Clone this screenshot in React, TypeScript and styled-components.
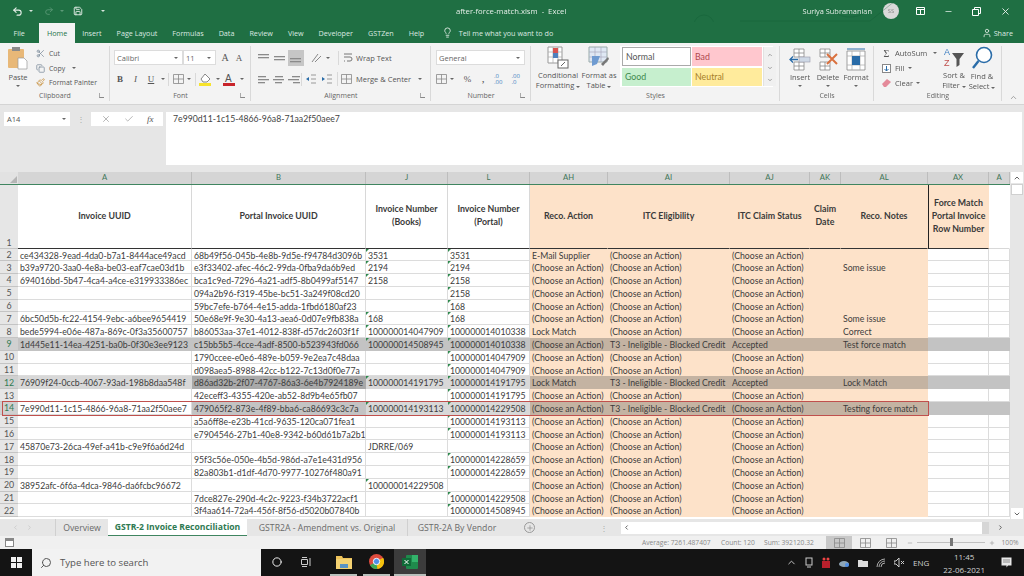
import React from "react";
import styled, { createGlobalStyle } from "styled-components";
import { Scissors, Copy, Paintbrush, Undo2, Redo2, Save, Lightbulb, X, Check, Search, User, Minus, ChevronUp, ChevronDown, ChevronLeft, ChevronRight, Plus, Circle } from "lucide-react";

const GlobalStyle = createGlobalStyle`
    html, body {
        margin: 0;
        padding: 0;
        background: #e6e6e6;
        overflow: hidden;
    }
    * { box-sizing: border-box; }
`;

const UI = `"Open Sans", "Noto Sans", sans-serif`;
const CELL = `Lato, "Liberation Sans", sans-serif`;
const COLS = "18px 174px 174px 82px 82px 78px 122px 80px 31px 87px 61px 21px";

const Page = styled.div`
    width: 1024px;
    height: 576px;
    display: flex;
    flex-direction: column;
    overflow: hidden;
    font-family: ${UI};
    filter: blur(0.4px);
`;

/* title bar */
const TitleBar = styled.div`
    height: 22px;
    background: #1f6f43;
    color: #e6efe9;
    font-size: 7.7px;
    display: flex;
    align-items: center;
    position: relative;
`;
const Qat = styled.div`
    width: 400px;
    padding-left: 12px;
    display: flex;
    align-items: center;
    gap: 3px;
`;
const Spacer = styled.span<{ $w: number }>`
    width: ${(p) => p.$w}px;
    flex: none;
`;
const Caret = styled.span<{ $c?: string; $l?: number; $t?: number }>`
    width: 0;
    height: 0;
    border-left: 2px solid transparent;
    border-right: 2px solid transparent;
    border-top: 2.5px solid ${(p) => p.$c || "#d8e6dd"};
    display: inline-block;
    margin-left: ${(p) => p.$l ?? 3}px;
    margin-top: ${(p) => p.$t ?? 0}px;
    flex: none;
`;
const DocName = styled.div`
    position: absolute;
    left: 456px;
    white-space: pre;
`;
const Account = styled.div`
    margin-left: auto;
    display: flex;
    align-items: center;
    font-size: 7.4px;
`;
const Avatar = styled.div`
    width: 16px;
    height: 16px;
    border-radius: 50%;
    background: #d9d9d9;
    color: #8a8a8a;
    font-size: 6px;
    display: flex;
    align-items: center;
    justify-content: center;
    margin: 0 17px 0 11px;
`;
const WinButtons = styled.div`
    display: flex;
    align-items: center;
    gap: 19px;
    width: 108px;
    padding-right: 10px;
`;
const Circuit = styled.svg`
    position: absolute;
    left: 680px;
    top: 0;
    opacity: 0.3;
    pointer-events: none;
`;

/* tabs */
const TabBar = styled.div`
    height: 21px;
    background: #1f6f43;
    color: #dce9e1;
    font-size: 7.2px;
    display: flex;
    align-items: stretch;
    padding-left: 6px;
    position: relative;
    white-space: nowrap;
`;
const Tab = styled.div<{ $active?: boolean; $mr?: number }>`
    padding: 0 7.5px;
    display: flex;
    align-items: center;
    background: ${(p) => (p.$active ? "#f3f3f3" : "transparent")};
    color: ${(p) => (p.$active ? "#26734a" : "inherit")};
    margin-top: 1px;
    margin-right: ${(p) => p.$mr ?? 0}px;
`;
const TellMe = styled.div`
    display: flex;
    align-items: center;
    gap: 6px;
    margin-left: 10px;
`;
const Share = styled.div`
    display: flex;
    align-items: center;
    gap: 2px;
    margin-left: auto;
    padding-right: 11px;
`;

/* ribbon */
const Ribbon = styled.div`
    height: 62px;
    background: #f3f3f3;
    border-bottom: 1px solid #d4d4d4;
    display: flex;
    color: #555;
    font-size: 7.5px;
`;
const Group = styled.div<{ $w: number }>`
    width: ${(p) => p.$w}px;
    flex: none;
    display: flex;
    flex-direction: column;
    padding: 3px 0 0;
    position: relative;
    &::after {
        content: "";
        position: absolute;
        right: 0;
        top: 3px;
        bottom: 3px;
        width: 1px;
        background: #d9d9d9;
    }
`;
const GroupBody = styled.div<{ $gap?: number; $pad?: string }>`
    flex: 1;
    display: flex;
    gap: ${(p) => p.$gap ?? 0}px;
    padding: ${(p) => p.$pad || "0"};
    min-height: 0;
`;
const GroupLabel = styled.div`
    height: 14px;
    text-align: center;
    font-size: 7px;
    line-height: 12px;
    color: #666;
    position: relative;
`;
const Launcher = styled.span`
    position: absolute;
    right: 6px;
    top: 3px;
    width: 5px;
    height: 5px;
    border-left: 1px solid #aaa;
    border-bottom: 1px solid #888;
`;
const BigBtn = styled.div<{ $w: number }>`
    width: ${(p) => p.$w}px;
    flex: none;
    display: flex;
    flex-direction: column;
    align-items: center;
    text-align: center;
    line-height: 10.3px;
    font-size: 7.5px;
    white-space: nowrap;
`;
const BigIcon = styled.div`
    height: 25px;
    display: flex;
    align-items: flex-end;
    justify-content: center;
    margin-bottom: 1px;
`;
const Stack = styled.div<{ $gap?: number; $top?: number; $w?: number; $fs?: number }>`
    display: flex;
    flex-direction: column;
    gap: ${(p) => p.$gap ?? 0}px;
    padding-top: ${(p) => p.$top ?? 0}px;
    width: ${(p) => (p.$w ? `${p.$w}px` : "auto")};
    font-size: ${(p) => (p.$fs ? `${p.$fs}px` : "inherit")};
    flex: none;
`;
const Line = styled.div<{ $gap?: number }>`
    display: flex;
    align-items: center;
    gap: ${(p) => p.$gap ?? 4}px;
    white-space: nowrap;
    height: 15.5px;
`;
const Combo = styled.div<{ $w: number }>`
    width: ${(p) => p.$w}px;
    height: 15px;
    background: #fff;
    border: 1px solid #dcdcdc;
    display: flex;
    align-items: center;
    justify-content: space-between;
    padding: 0 4px 0 2px;
    color: #666;
    font-size: 7.5px;
    flex: none;
`;
const Glyph = styled.span<{ $b?: boolean; $i?: boolean; $u?: boolean; $w?: number; $s?: number; $l?: number }>`
    width: ${(p) => p.$w ?? 13}px;
    text-align: center;
    font-family: "Liberation Serif", serif;
    font-size: ${(p) => p.$s ?? 9}px;
    font-weight: ${(p) => (p.$b ? 700 : 400)};
    font-style: ${(p) => (p.$i ? "italic" : "normal")};
    text-decoration: ${(p) => (p.$u ? "underline" : "none")};
    color: #555;
    flex: none;
    margin-left: ${(p) => p.$l ?? 0}px;
`;
const Sep = styled.span<{ $h?: number }>`
    width: 1px;
    height: ${(p) => p.$h ?? 13}px;
    background: #d9d9d9;
    flex: none;
`;
const AlignBtn = styled.div<{ $on?: boolean; $w?: number }>`
    width: ${(p) => p.$w ?? 16}px;
    height: 16px;
    display: flex;
    align-items: center;
    justify-content: center;
    background: ${(p) => (p.$on ? "#c6c6c6" : "transparent")};
    flex: none;
`;
const Fraction = styled.span`
    font-size: 6px;
    color: #3f7fc1;
    line-height: 6px;
`;
const Gallery = styled.div`
    width: 153px;
    height: 41px;
    background: #fff;
    display: grid;
    grid-template-columns: 69px 70px 13px;
    grid-template-rows: 1fr 1fr;
    gap: 2px 1px;
    padding: 1px 0 1px 2px;
    flex: none;
`;
const StyleCell = styled.div<{ $bg: string; $fg: string; $boxed?: boolean }>`
    background: ${(p) => p.$bg};
    color: ${(p) => p.$fg};
    border: ${(p) => (p.$boxed ? "1px solid #aaa" : "none")};
    font-family: ${CELL};
    font-size: 8.8px;
    display: flex;
    align-items: center;
    padding-left: 3px;
`;
const GalleryScroll = styled.div`
    grid-column: 3;
    grid-row: 1 / span 2;
    background: #f0f0f0;
    border-left: 1px solid #e2e2e2;
    display: flex;
    flex-direction: column;
    align-items: center;
    justify-content: space-between;
    padding: 5px 0 3px;
`;
const Collapse = styled.div`
    flex: 1;
    display: flex;
    align-items: flex-end;
    justify-content: center;
    padding-bottom: 2px;
    color: #888;
`;

/* formula bar */
const FormulaBar = styled.div`
    height: 67px;
    background: #e6e6e6;
    display: flex;
    align-items: flex-start;
    padding: 7px 2px 0 4px;
    flex: none;
`;
const NameBox = styled.div`
    width: 66px;
    height: 14px;
    background: #fff;
    font-size: 7.5px;
    color: #555;
    display: flex;
    align-items: center;
    justify-content: space-between;
    padding: 0 4px 0 3px;
`;
const Dots = styled.div`
    width: 21px;
    text-align: center;
    color: #aaa;
    font-size: 8px;
    line-height: 13px;
`;
const FxBox = styled.div`
    width: 72px;
    height: 14px;
    background: #fff;
    display: flex;
    align-items: center;
    justify-content: space-around;
    padding: 0 3px;
    color: #aaa;
    margin-right: 3px;
`;
const Fx = styled.i`
    font-family: "Liberation Serif", serif;
    font-size: 9px;
    color: #555;
`;
const FormulaInput = styled.div`
    flex: 1;
    height: 53px;
    background: #fff;
    font-family: ${CELL};
    font-size: 8.7px;
    color: #444;
    padding: 1px 7px;
`;

/* sheet */
const SheetWrap = styled.div`
    flex: none;
    height: 347px;
    display: flex;
    background: #fff;
`;
const Sheet = styled.div`
    width: 1010px;
    flex: none;
    overflow: hidden;
`;
const ColHeadRow = styled.div`
    display: grid;
    grid-template-columns: ${COLS};
    height: 12px;
    background: #d5d5d5;
`;
const ColHead = styled.div`
    border-right: 1px solid #bdbdbd;
    text-align: center;
    font-size: 7.7px;
    line-height: 11px;
    color: #417558;
    font-family: ${CELL};
    overflow: hidden;
`;
const Corner = styled.div`
    background: #e2e2e2;
    position: relative;
    &::after {
        content: "";
        position: absolute;
        right: 1px;
        bottom: 1px;
        border-left: 7px solid transparent;
        border-bottom: 7px solid #b5b5b5;
    }
`;
const HeadRow = styled.div`
    display: grid;
    grid-template-columns: ${COLS};
    height: 64.5px;
    border-top: 1px solid #3f8560;
`;
const RowNum = styled.div<{ $sel?: boolean; $bottom?: boolean }>`
    background: ${(p) => (p.$sel ? "#d0d0d0" : "#e6e6e6")};
    color: ${(p) => (p.$sel ? "#2f7a52" : "#555")};
    border-bottom: 1px solid #c4c4c4;
    font-family: ${CELL};
    font-size: 8.8px;
    display: flex;
    align-items: ${(p) => (p.$bottom ? "flex-end" : "center")};
    justify-content: center;
`;
const HeadCell = styled.div<{ $peach?: boolean; $left?: boolean; $empty?: boolean }>`
    background: ${(p) => (p.$peach ? "#fde2c9" : "#fff")};
    border-bottom: 1px solid ${(p) => (p.$empty ? "#d8d8d8" : "#333")};
    border-left: ${(p) => (p.$left ? "1px solid #222" : "none")};
    border-right: 1px solid ${(p) => (p.$peach || p.$empty ? "transparent" : "#d8d8d8")};
    font-family: ${CELL};
    font-size: 8.8px;
    font-weight: 700;
    color: #3a3a3a;
    line-height: 12.8px;
    display: flex;
    align-items: center;
    justify-content: center;
    text-align: center;
`;
const Row = styled.div`
    display: grid;
    grid-template-columns: ${COLS};
    grid-template-rows: 12.8px;
    height: 12.8px;
    position: relative;
`;
const Cell = styled.div<{ $bg: string; $grid: boolean; $mark?: boolean }>`
    background: ${(p) => p.$bg};
    border-right: ${(p) => (p.$grid ? "1px solid #dcdcdc" : "none")};
    border-bottom: ${(p) => (p.$grid ? "1px solid #dcdcdc" : "none")};
    font-family: ${CELL};
    font-size: 8.7px;
    line-height: 13.6px;
    color: #3c3c3c;
    padding-left: 2px;
    white-space: nowrap;
    position: relative;
    &::before {
        content: "";
        display: ${(p) => (p.$mark ? "block" : "none")};
        position: absolute;
        left: 0;
        top: 0;
        border-top: 3px solid #2f8a4e;
        border-right: 3px solid transparent;
    }
`;
const ActiveOutline = styled.div`
    position: absolute;
    left: 2px;
    width: 927px;
    top: -1px;
    bottom: -1px;
    border: 1px solid #c0504d;
    pointer-events: none;
    z-index: 5;
`;
const VScroll = styled.div`
    flex: 1;
    background: #e6e6e6;
    display: flex;
    flex-direction: column;
    align-items: center;
    color: #666;
`;
const VArrow = styled.div`
    width: 12px;
    height: 11px;
    background: #fff;
    display: flex;
    align-items: center;
    justify-content: center;
    flex: none;
`;
const VThumb = styled.div`
    width: 12px;
    height: 11px;
    background: #fff;
    border: 1px solid #d0d0d0;
    margin-top: 1px;
    flex: none;
`;
const VGap = styled.div`
    flex: 1;
`;

/* sheet tabs */
const SheetTabs = styled.div`
    height: 17px;
    background: #e6e6e6;
    display: flex;
    align-items: stretch;
    font-size: 8.7px;
    color: #6a6a6a;
    flex: none;
`;
const TabNav = styled.div`
    width: 55px;
    display: flex;
    align-items: center;
    padding-left: 12px;
    gap: 7px;
    color: #bdbdbd;
`;
const SheetTab = styled.div<{ $active?: boolean; $w: number; $noLine?: boolean }>`
    width: ${(p) => p.$w}px;
    flex: none;
    display: flex;
    align-items: center;
    justify-content: center;
    white-space: nowrap;
    background: ${(p) => (p.$active ? "#fff" : "transparent")};
    color: ${(p) => (p.$active ? "#2f7a52" : "inherit")};
    font-weight: ${(p) => (p.$active ? 700 : 400)};
    font-size: ${(p) => (p.$active ? "8.6px" : "inherit")};
    border-bottom: ${(p) => (p.$active ? "1px solid #3f8560" : "none")};
    border-left: ${(p) => (p.$active || p.$noLine ? "none" : "1px solid #d0d0d0")};
`;
const AddSheet = styled.div`
    width: 115px;
    flex: none;
    display: flex;
    align-items: center;
    justify-content: space-between;
    padding: 0 7px 0 18px;
    color: #888;
`;
const AddCircle = styled.div`
    width: 11px;
    height: 11px;
    border-radius: 50%;
    border: 1px solid #999;
    display: flex;
    align-items: center;
    justify-content: center;
`;
const HScroll = styled.div`
    flex: 1;
    display: flex;
    align-items: center;
    padding: 1px 8px 1px 0;
    color: #555;
`;
const HBtn = styled.div`
    width: 10px;
    height: 12px;
    background: #fff;
    display: flex;
    align-items: center;
    justify-content: center;
    flex: none;
`;
const HTrack = styled.div`
    width: 358px;
    height: 12px;
    background: #fff;
    border-right: 7px solid #d6d6d6;
    flex: none;
    margin-right: 8px;
`;

/* status bar */
const StatusBar = styled.div`
    height: 13px;
    background: #f0f0f0;
    display: flex;
    align-items: stretch;
    font-size: 6.7px;
    color: #888;
    padding-left: 5px;
    flex: none;
    white-space: nowrap;
`;
const StatusText = styled.div<{ $w: number; $center?: boolean }>`
    width: ${(p) => p.$w}px;
    flex: none;
    display: flex;
    align-items: center;
    justify-content: ${(p) => (p.$center ? "center" : "flex-start")};
`;
const ViewBtn = styled.div<{ $on?: boolean; $w: number }>`
    width: ${(p) => p.$w}px;
    flex: none;
    display: flex;
    align-items: center;
    justify-content: center;
    background: ${(p) => (p.$on ? "#c8c8c8" : "transparent")};
`;
const Zoomer = styled.div`
    width: 68px;
    height: 1px;
    background: #c0c0c0;
    align-self: center;
    position: relative;
    margin: 0 3px;
    flex: none;
`;
const ZoomThumb = styled.span`
    position: absolute;
    left: 33px;
    top: -4px;
    width: 3px;
    height: 8px;
    background: #777;
`;

/* taskbar */
const Taskbar = styled.div`
    flex: 1;
    background: #141414;
    display: flex;
    align-items: stretch;
    color: #d0d0d0;
`;
const Start = styled.div`
    width: 32px;
    display: flex;
    align-items: center;
    justify-content: center;
    flex: none;
`;
const WinLogo = styled.div`
    display: grid;
    grid-template-columns: 5px 5px;
    grid-template-rows: 5px 5px;
    gap: 1px;
    & > span { background: #f0f0f0; }
`;
const SearchBox = styled.div`
    width: 229px;
    background: #f2f2f2;
    color: #555;
    font-size: 9.6px;
    display: flex;
    align-items: center;
    gap: 8px;
    padding-left: 8px;
    flex: none;
`;
const MirrorSearch = styled(Search)`
    transform: scaleX(-1);
`;
const TaskIcon = styled.div<{ $w: number; $on?: boolean; $bar?: boolean; $ml?: number }>`
    width: ${(p) => p.$w}px;
    flex: none;
    display: flex;
    align-items: center;
    justify-content: center;
    margin-left: ${(p) => p.$ml ?? 0}px;
    background: ${(p) => (p.$on ? "#3c3c3c" : "transparent")};
    border-bottom: 2px solid ${(p) => (p.$bar ? "#b8c0bc" : "transparent")};
`;
const Tray = styled.div`
    margin-left: auto;
    display: flex;
    align-items: center;
    gap: 8px;
    font-size: 8px;
    padding-right: 12px;
`;
const Clock = styled.div`
    text-align: center;
    font-size: 8px;
    line-height: 13px;
    margin: 0 8px 0 6px;
`;

const WinIcon = () => (
    <WinLogo><span /><span /><span /><span /></WinLogo>
);

const PasteIcon = () => (
    <svg width="22" height="25" viewBox="0 0 22 25">
        <rect x="1" y="3" width="16" height="19" rx="1" fill="#e8b878" />
        <rect x="5" y="1" width="8" height="4" fill="#8a8a8a" />
        <path d="M11 12h6l3 3v8h-9z" fill="#fff" stroke="#999" strokeWidth=".7" />
    </svg>
);
const CondIcon = () => (
    <svg width="22" height="23" viewBox="0 0 22 23">
        <path d="M1 1h14v16H1z" fill="#fff" stroke="#999" />
        <path d="M1 6h14M1 11h14M6 1v16M11 1v16" stroke="#aaa" strokeWidth=".7" />
        <rect x="6" y="2" width="5" height="5" fill="#d9534f" />
        <rect x="6" y="7" width="5" height="5" fill="#4f81bd" />
        <rect x="11" y="14" width="10" height="8" fill="#fff" stroke="#666" />
        <path d="M14 20l4-4" stroke="#666" />
    </svg>
);
const TableIcon = () => (
    <svg width="22" height="23" viewBox="0 0 22 23">
        <path d="M1 1h18v15H1z" fill="#dfe8f4" stroke="#9aa" />
        <path d="M1 6h18M1 11h18M7 1v15M13 1v15" stroke="#aab" strokeWidth=".7" />
        <path d="M4 10h8l-3 8-5 2z" fill="#6f9bd1" />
        <path d="M13 18l7-7 1 2-6 7z" fill="#777" />
    </svg>
);
const InsertIcon = () => (
    <svg width="22" height="23" viewBox="0 0 22 23">
        <path d="M5 1h10v8H5zM5 14h10v8H5zM5 5h10M10 1v8M5 18h10M10 14v8" fill="#fff" stroke="#888" strokeWidth=".8" />
        <rect x="10" y="9" width="11" height="5" fill="#cfd9e6" stroke="#99a" strokeWidth=".6" />
        <path d="M1 11.5h8M4 8.5l-3 3 3 3" fill="none" stroke="#2a6ca8" strokeWidth="1.3" />
    </svg>
);
const DeleteIcon = () => (
    <svg width="22" height="23" viewBox="0 0 22 23">
        <path d="M3 1h10v8H3zM3 14h10v8H3zM3 5h10M8 1v8M3 18h10M8 14v8" fill="#fff" stroke="#888" strokeWidth=".8" />
        <path d="M10 6l10 10M20 6L10 16" stroke="#d9713f" strokeWidth="2" />
    </svg>
);
const FormatIcon = () => (
    <svg width="22" height="23" viewBox="0 0 22 23">
        <path d="M2 3h18v19H2z" fill="#fff" stroke="#888" strokeWidth=".8" />
        <path d="M2 8h18M2 17h18M7 3v19M15 3v19" stroke="#aaa" strokeWidth=".7" />
        <rect x="7" y="8" width="8" height="9" fill="#2a6ca8" />
        <path d="M2 1h18" stroke="#2a6ca8" />
    </svg>
);
const SortIcon = () => (
    <svg width="20" height="23" viewBox="0 0 20 23">
        <text x="0" y="9" fontSize="9" fill="#3f7fc1" fontFamily="Liberation Sans">A</text>
        <text x="0" y="20" fontSize="9" fill="#c0504d" fontFamily="Liberation Sans">Z</text>
        <path d="M8 7h12l-4.5 6v6l-3 2v-8z" fill="#555" />
    </svg>
);
const FindIcon = () => (
    <svg width="22" height="24" viewBox="0 0 22 24">
        <circle cx="13" cy="9" r="7.500" fill="#fff" stroke="#2a6ca8" strokeWidth="1.6" />
        <path d="M7.500 15L2 22" stroke="#2a6ca8" strokeWidth="2.4" />
    </svg>
);
const Bars = ({ rows }: { rows: number[][] }) => (
    <svg width="12" height="10" viewBox="0 0 12 10">
        {rows.map((r, i) => <rect key={i} x={r[0]} y={r[1]} width={r[2]} height="1.3" fill="#8a8a8a" />)}
    </svg>
);
const MiniGrid = () => (
    <svg width="11" height="10" viewBox="0 0 11 10">
        <path d="M.5.5h10v9H.5zM.5 5h10M5.500.5v9" fill="none" stroke="#888" strokeWidth=".8" />
    </svg>
);
const Folder = () => (
    <svg width="16" height="14" viewBox="0 0 16 14">
        <path d="M0 1h6l1 2h9v11H0z" fill="#eec35a" />
        <rect x="0" y="4" width="16" height="10" fill="#f4d272" />
        <rect x="4" y="9" width="8" height="4" fill="#5a93c4" />
    </svg>
);
const Chrome = () => (
    <svg width="15" height="15" viewBox="0 0 16 16">
        <circle cx="8" cy="8" r="8" fill="#dd4b3e" />
        <path d="M8 8L1 12a8 8 0 0 0 8 4z" fill="#3fa757" />
        <path d="M8 8l1 8a8 8 0 0 0 6-12z" fill="#f4c20d" />
        <circle cx="8" cy="8" r="3.4" fill="#4f8fe8" stroke="#fff" />
    </svg>
);
const ExcelIcon = () => (
    <svg width="16" height="14" viewBox="0 0 16 14">
        <rect x="4" y="0" width="12" height="14" rx="1" fill="#1f8a4c" />
        <rect x="10" y="0" width="6" height="7" fill="#33b36b" />
        <rect x="0" y="3" width="9" height="8" fill="#106b38" />
        <path d="M2.500 5l4 4M6.500 5l-4 4" stroke="#fff" />
    </svg>
);

const CHOOSE = "(Choose an Action)";
const T3 = "T3 - Ineligible - Blocked Credit";

interface RowData {
    n: number;
    a?: string;
    b?: string;
    j?: string;
    l?: string;
    ah?: string;
    ai?: string;
    aj?: string;
    al?: string;
    shades?: number[];
}

// shades: A, B, J, L, rest
const rows: RowData[] = [
    { n: 2, a: "ce434328-9ead-4da0-b7a1-8444ace49acd", b: "68b49f56-045b-4e8b-9d5e-f94784d3096b", j: "3531", l: "3531", ah: "E-Mail Supplier" },
    { n: 3, a: "b39a9720-3aa0-4e8a-be03-eaf7cae03d1b", b: "e3f33402-afec-46c2-99da-0fba9da6b9ed", j: "2194", l: "2194", al: "Some issue" },
    { n: 4, a: "694016bd-5b47-4ca4-a4ce-e319933386ec", b: "bca1c9ed-7296-4a21-adf5-8b0499af5147", j: "2158", l: "2158" },
    { n: 5, b: "094a2b96-f319-45be-bc51-3a249f08cd20", l: "2158" },
    { n: 6, b: "59bc7efe-b764-4e15-adda-1fbd6180af23", l: "168" },
    { n: 7, a: "6bc50d5b-fc22-4154-9ebc-a6bee9654419", b: "50e68e9f-9e30-4a13-aea6-0d07e9fb838a", j: "168", l: "168", al: "Some issue" },
    { n: 8, a: "bede5994-e06e-487a-869c-0f3a35600757", b: "b86053aa-37e1-4012-838f-d57dc2603f1f", j: "100000014047909", l: "100000014010338", ah: "Lock Match", al: "Correct" },
    { n: 9, a: "1d445e11-14ea-4251-ba0b-0f30e3ee9123", b: "c15bb5b5-4cce-4adf-8500-b523943fd066", j: "100000014508945", l: "100000014010338", ai: T3, aj: "Accepted", al: "Test force match", shades: [2, 2, 2, 2, 2] },
    { n: 10, b: "1790ccee-e0e6-489e-b059-9e2ea7c48daa", l: "100000014047909" },
    { n: 11, b: "d098aea5-8988-42cc-b122-7c13d0f0e77a", l: "100000014047909" },
    { n: 12, a: "76909f24-0ccb-4067-93ad-198b8daa548f", b: "d86ad32b-2f07-4767-86a3-6e4b7924189e", j: "100000014191795", l: "100000014191795", ah: "Lock Match", ai: T3, aj: "Accepted", al: "Lock Match", shades: [1, 3, 1, 1, 2] },
    { n: 13, b: "42eceff3-4355-420e-ab52-8d9b4e65fb07", l: "100000014191795" },
    { n: 14, a: "7e990d11-1c15-4866-96a8-71aa2f50aee7", b: "479065f2-873e-4f89-bba6-ca86693c3c7a", j: "100000014193113", l: "100000014229508", ai: T3, al: "Testing force match", shades: [0, 2, 1, 1, 2] },
    { n: 15, b: "a5a6ff8e-e23b-41cd-9635-120ca071fea1", l: "100000014193113" },
    { n: 16, b: "e7904546-27b1-40e8-9342-b60d61b7a2b1", l: "100000014193113" },
    { n: 17, a: "45870e73-26ca-49ef-a41b-c9e9f6a6d24d", j: "JDRRE/069" },
    { n: 18, b: "95f3c56e-050e-4b5d-986d-a7e1e431d956", l: "100000014228659" },
    { n: 19, b: "82a803b1-d1df-4d70-9977-10276f480a91", l: "100000014228659" },
    { n: 20, a: "38952afc-6f6a-4dca-9846-da6fcbc96672", j: "100000014229508" },
    { n: 21, b: "7dce827e-290d-4c2c-9223-f34b3722acf1", l: "100000014229508" },
    { n: 22, b: "3f4aa614-72a4-456f-8f56-d5020b07840b", l: "100000014508945" },
];

const WHITE = ["#ffffff", "#d8d8d8", "#c3c3c3", "#a9a9a9"];
const PEACH = ["#fde2c9", "#d8c3ae", "#c4b3a2", "#a99a8b"];

const SELECTED = [9, 12, 14];

const SheetRow = ({ r }: { r: RowData }) => {
    const s = r.shades || [0, 0, 0, 0, 0];
    const isNum = (v?: string) => !!v && /^\d+$/.test(v);
    const plainCell = (text: string | undefined, shade: number, mark?: boolean) => (
        <Cell $bg={WHITE[shade]} $grid={shade === 0} $mark={mark}>{text}</Cell>
    );
    const peach = (text?: string) => (
        <Cell $bg={PEACH[s[4]]} $grid={false}>{text}</Cell>
    );
    return (
        <Row>
            <RowNum $sel={SELECTED.includes(r.n)}>{r.n}</RowNum>
            {plainCell(r.a, s[0])}
            {plainCell(r.b, s[1])}
            {plainCell(r.j, s[2], isNum(r.j))}
            {plainCell(r.l, s[3], isNum(r.l))}
            {peach(r.ah || CHOOSE)}
            {peach(r.ai || CHOOSE)}
            {peach(r.aj || CHOOSE)}
            {peach()}
            {peach(r.al)}
            {plainCell("", s[4])}
            {plainCell("", s[4])}
            {r.n === 14 && <ActiveOutline />}
        </Row>
    );
};

const App = () => {
    return (
        <Page>
            <GlobalStyle />
            <TitleBar>
                <Qat>
                    <Undo2 size={11} strokeWidth={2.4} />
                    <Caret />
                    <Spacer $w={5} />
                    <Redo2 size={10} color="#5d9a78" />
                    <Caret $c="#5d9a78" />
                    <Spacer $w={3} />
                    <Save size={10} strokeWidth={2.2} />
                    <Spacer $w={9} />
                    <Caret />
                </Qat>
                <DocName>{"after-force-match.xlsm  -  Excel"}</DocName>
                <Circuit width="240" height="43" viewBox="0 0 240 43" fill="none" stroke="#0f5a33">
                    <circle cx="24" cy="25" r="10" />
                    <path d="M-60 10h40M60 21h130l25-20M90 32h90l20 10M150 8c10 12 30 12 40 0" />
                </Circuit>
                <Account>
                    Suriya Subramanian
                    <Avatar>SS</Avatar>
                    <WinButtons>
                        <svg width="9" height="8" viewBox="0 0 9 8"><path d="M.5.5h8v7h-8zM.5 2.500h8M4.500 2.500v5" fill="none" stroke="#fff" /></svg>
                        <Minus size={9} />
                        <svg width="9" height="9" viewBox="0 0 9 9"><path d="M.5 2.500h6v6h-6zM2.500 2.500v-2h6v6h-2" fill="none" stroke="#fff" /></svg>
                        <X size={11} />
                    </WinButtons>
                </Account>
            </TitleBar>
            <TabBar>
                <Tab $mr={7}>File</Tab>
                <Tab $active>Home</Tab>
                <Tab>Insert</Tab>
                <Tab>Page Layout</Tab>
                <Tab>Formulas</Tab>
                <Tab>Data</Tab>
                <Tab>Review</Tab>
                <Tab>View</Tab>
                <Tab>Developer</Tab>
                <Tab>GSTZen</Tab>
                <Tab>Help</Tab>
                <TellMe>
                    <Lightbulb size={11} />
                    Tell me what you want to do
                </TellMe>
                <Share>
                    <User size={10} />
                    Share
                </Share>
            </TabBar>
            <Ribbon>
                <Group $w={110}>
                    <GroupBody>
                        <BigBtn $w={36}>
                            <BigIcon><PasteIcon /></BigIcon>
                            Paste
                            <Caret $c="#666" $l={0} $t={3} />
                        </BigBtn>
                        <Stack $fs={6.9}>
                            <Line><Scissors size={9} color="#7a8a99" />Cut</Line>
                            <Line><Copy size={9} color="#7a8a99" />Copy<Caret $c="#666" /></Line>
                            <Line><Paintbrush size={9} color="#c8913f" />Format Painter</Line>
                        </Stack>
                    </GroupBody>
                    <GroupLabel>Clipboard<Launcher /></GroupLabel>
                </Group>
                <Group $w={141}>
                    <GroupBody $pad="4px 0 0 4px">
                        <Stack $gap={6}>
                            <Line $gap={0}>
                                <Combo $w={69}>Calibri<Caret $c="#666" /></Combo>
                                <Combo $w={33}>11<Caret $c="#666" /></Combo>
                                <Glyph $w={14} $s={10} $l={2}>A</Glyph>
                                <Glyph $w={14} $s={9}>A</Glyph>
                            </Line>
                            <Line $gap={3.5}>
                                <Glyph $b $w={12}>B</Glyph>
                                <Glyph $i $w={12}>I</Glyph>
                                <Glyph $u $w={12}>U</Glyph>
                                <Caret $c="#666" $l={0} />
                                <Sep />
                                <MiniGrid />
                                <Caret $c="#666" $l={0} />
                                <Sep />
                                <svg width="13" height="13" viewBox="0 0 13 13"><path d="M6 1l5 5-3 3H4L2 6z" fill="#fff" stroke="#888" /><rect x="0" y="10" width="12" height="3" fill="#f7e32c" /></svg>
                                <Caret $c="#666" $l={0} />
                                <svg width="13" height="13" viewBox="0 0 13 13"><text x="2" y="9" fontSize="10" fill="#555" fontFamily="Liberation Sans">A</text><rect x="0" y="10" width="12" height="3" fill="#c8242b" /></svg>
                                <Caret $c="#666" $l={0} />
                            </Line>
                        </Stack>
                    </GroupBody>
                    <GroupLabel>Font<Launcher /></GroupLabel>
                </Group>
                <Group $w={180}>
                    <GroupBody $pad="4px 0 0 5px">
                        <Stack $gap={6}>
                            <Line $gap={0}>
                                <AlignBtn><Bars rows={[[0, 1, 11], [0, 4, 11]]} /></AlignBtn>
                                <AlignBtn><Bars rows={[[0, 3, 11], [0, 6, 11]]} /></AlignBtn>
                                <AlignBtn $on><Bars rows={[[0, 5, 11], [0, 8, 11]]} /></AlignBtn>
                                <Spacer $w={5} />
                                <AlignBtn><svg width="12" height="10" viewBox="0 0 12 10"><path d="M1 9l6-8M4 9l6-6" stroke="#888" fill="none" /></svg></AlignBtn>
                                <Caret $c="#666" $l={1} />
                                <Spacer $w={8} />
                                <Sep $h={14} />
                                <Spacer $w={4} />
                                <svg width="10" height="11" viewBox="0 0 10 11"><path d="M1 2h8M1 5h6a2 2 0 0 1 0 4H4M1 9h1" stroke="#777" fill="none" /></svg>
                                <Spacer $w={3} />
                                Wrap Text
                            </Line>
                            <Line $gap={0}>
                                <AlignBtn $w={15}><Bars rows={[[0, 2, 8], [0, 5, 11], [0, 8, 7]]} /></AlignBtn>
                                <AlignBtn $w={15}><Bars rows={[[2, 2, 8], [0, 5, 11], [2, 8, 7]]} /></AlignBtn>
                                <AlignBtn $w={15}><Bars rows={[[4, 2, 8], [0, 5, 11], [5, 8, 7]]} /></AlignBtn>
                                <Sep />
                                <AlignBtn><svg width="11" height="10" viewBox="0 0 11 10"><path d="M6 1h5M6 5h5M6 9h5" stroke="#999" /><path d="M4 3L1 5l3 2z" fill="#2a6ca8" /></svg></AlignBtn>
                                <AlignBtn><svg width="11" height="10" viewBox="0 0 11 10"><path d="M6 1h5M6 5h5M6 9h5" stroke="#999" /><path d="M1 3l3 2-3 2z" fill="#2a6ca8" /></svg></AlignBtn>
                                <Spacer $w={3} />
                                <Sep $h={14} />
                                <Spacer $w={3} />
                                <MiniGrid />
                                <Spacer $w={4} />
                                Merge &amp; Center
                                <Caret $c="#666" $l={7} />
                            </Line>
                        </Stack>
                    </GroupBody>
                    <GroupLabel>Alignment<Launcher /></GroupLabel>
                </Group>
                <Group $w={100}>
                    <GroupBody $pad="4px 0 0 5px">
                        <Stack $gap={6}>
                            <Line $gap={0}><Combo $w={89}>General<Caret $c="#666" /></Combo></Line>
                            <Line $gap={9}>
                                <MiniGrid />
                                <Caret $c="#666" $l={-6} />
                                <Glyph $w={9} $s={9}>%</Glyph>
                                <Glyph $b $w={4}>,</Glyph>
                                <Fraction>.0<br />.00</Fraction>
                                <Fraction>.00<br />.0</Fraction>
                            </Line>
                        </Stack>
                    </GroupBody>
                    <GroupLabel>Number<Launcher /></GroupLabel>
                </Group>
                <Group $w={249}>
                    <GroupBody $pad="0 0 0 5px">
                        <BigBtn $w={44}>
                            <BigIcon><CondIcon /></BigIcon>
                            Conditional
                            <span>Formatting <Caret $c="#666" $l={0} /></span>
                        </BigBtn>
                        <BigBtn $w={38}>
                            <BigIcon><TableIcon /></BigIcon>
                            Format as
                            <span>Table <Caret $c="#666" $l={0} /></span>
                        </BigBtn>
                        <Spacer $w={2} />
                        <Gallery>
                            <StyleCell $bg="#fff" $fg="#555" $boxed>Normal</StyleCell>
                            <StyleCell $bg="#ffc7ce" $fg="#b04a50">Bad</StyleCell>
                            <GalleryScroll>
                                <ChevronUp size={6} />
                                <ChevronDown size={6} />
                                <ChevronDown size={6} />
                            </GalleryScroll>
                            <StyleCell $bg="#c6efce" $fg="#3f8a50">Good</StyleCell>
                            <StyleCell $bg="#ffeb9c" $fg="#a77e2a">Neutral</StyleCell>
                        </Gallery>
                    </GroupBody>
                    <GroupLabel>Styles</GroupLabel>
                </Group>
                <Group $w={94}>
                    <GroupBody $pad="0 0 0 6px">
                        <BigBtn $w={28}><BigIcon><InsertIcon /></BigIcon>Insert<Caret $c="#666" $l={0} $t={3} /></BigBtn>
                        <BigBtn $w={28}><BigIcon><DeleteIcon /></BigIcon>Delete<Caret $c="#666" $l={0} $t={3} /></BigBtn>
                        <BigBtn $w={28}><BigIcon><FormatIcon /></BigIcon>Format<Caret $c="#666" $l={0} $t={3} /></BigBtn>
                    </GroupBody>
                    <GroupLabel>Cells</GroupLabel>
                </Group>
                <Group $w={128}>
                    <GroupBody $pad="0 0 0 8px">
                        <Stack $w={58}>
                            <Line><Glyph $w={9} $s={10}>Σ</Glyph>AutoSum<Caret $c="#666" $l={2} /></Line>
                            <Line><svg width="9" height="9" viewBox="0 0 9 9"><rect x=".5" y=".5" width="8" height="8" fill="#fff" stroke="#888" /><path d="M4.500 2v5M2.500 5l2 2 2-2" stroke="#2a6ca8" fill="none" /></svg>Fill<Caret $c="#666" $l={-1} /></Line>
                            <Line><svg width="9" height="9" viewBox="0 0 9 9"><path d="M0 6l5-5 4 3-5 5H2z" fill="#e48a9a" /></svg>Clear<Caret $c="#666" $l={-1} /></Line>
                        </Stack>
                        <BigBtn $w={28}><BigIcon><SortIcon /></BigIcon>Sort &amp;<span>Filter <Caret $c="#666" $l={0} /></span></BigBtn>
                        <BigBtn $w={28}><BigIcon><FindIcon /></BigIcon>Find &amp;<span>Select <Caret $c="#666" $l={0} /></span></BigBtn>
                    </GroupBody>
                    <GroupLabel>Editing</GroupLabel>
                </Group>
                <Collapse><ChevronUp size={9} /></Collapse>
            </Ribbon>
            <FormulaBar>
                <NameBox>A14<Caret $c="#666" /></NameBox>
                <Dots>⋮</Dots>
                <FxBox>
                    <X size={10} />
                    <Check size={10} />
                    <Fx>fx</Fx>
                </FxBox>
                <FormulaInput>7e990d11-1c15-4866-96a8-71aa2f50aee7</FormulaInput>
            </FormulaBar>
            <SheetWrap>
                <Sheet>
                    <ColHeadRow>
                        <Corner />
                        <ColHead>A</ColHead>
                        <ColHead>B</ColHead>
                        <ColHead>J</ColHead>
                        <ColHead>L</ColHead>
                        <ColHead>AH</ColHead>
                        <ColHead>AI</ColHead>
                        <ColHead>AJ</ColHead>
                        <ColHead>AK</ColHead>
                        <ColHead>AL</ColHead>
                        <ColHead>AX</ColHead>
                        <ColHead>A</ColHead>
                    </ColHeadRow>
                    <HeadRow>
                        <RowNum $bottom>1</RowNum>
                        <HeadCell>Invoice UUID</HeadCell>
                        <HeadCell>Portal Invoice UUID</HeadCell>
                        <HeadCell>Invoice Number<br />(Books)</HeadCell>
                        <HeadCell>Invoice Number<br />(Portal)</HeadCell>
                        <HeadCell $peach>Reco. Action</HeadCell>
                        <HeadCell $peach>ITC Eligibility</HeadCell>
                        <HeadCell $peach>ITC Claim Status</HeadCell>
                        <HeadCell $peach>Claim<br />Date</HeadCell>
                        <HeadCell $peach>Reco. Notes</HeadCell>
                        <HeadCell $peach $left>Force Match<br />Portal Invoice<br />Row Number</HeadCell>
                        <HeadCell $empty />
                    </HeadRow>
                    {rows.map((r) => <SheetRow key={r.n} r={r} />)}
                </Sheet>
                <VScroll>
                    <VArrow><ChevronUp size={8} strokeWidth={3} /></VArrow>
                    <VThumb />
                    <VGap />
                    <VArrow><ChevronDown size={8} strokeWidth={3} /></VArrow>
                </VScroll>
            </SheetWrap>
            <SheetTabs>
                <TabNav><ChevronLeft size={7} /><ChevronRight size={7} /></TabNav>
                <SheetTab $w={53}>Overview</SheetTab>
                <SheetTab $w={139} $active>GSTR-2 Invoice Reconciliation</SheetTab>
                <SheetTab $w={160} $noLine>GSTR2A - Amendment vs. Original</SheetTab>
                <SheetTab $w={99}>GSTR-2A By Vendor</SheetTab>
                <AddSheet>
                    <AddCircle><Plus size={8} /></AddCircle>
                    <Dots>⋮</Dots>
                </AddSheet>
                <HScroll>
                    <HBtn><ChevronLeft size={7} strokeWidth={3} /></HBtn>
                    <HTrack />
                    <ChevronRight size={7} strokeWidth={3} />
                </HScroll>
            </SheetTabs>
            <StatusBar>
                <StatusText $w={637}>
                    <svg width="9" height="9" viewBox="0 0 9 9"><rect x=".5" y=".5" width="8" height="8" fill="#fff" stroke="#888" /><rect x=".5" y=".5" width="8" height="2.5" fill="#888" /></svg>
                </StatusText>
                <StatusText $w={79}>Average: 7261.487407</StatusText>
                <StatusText $w={43}>Count: 120</StatusText>
                <StatusText $w={62}>Sum: 392120.32</StatusText>
                <ViewBtn $w={26} $on><MiniGrid /></ViewBtn>
                <ViewBtn $w={26}><MiniGrid /></ViewBtn>
                <ViewBtn $w={27}><MiniGrid /></ViewBtn>
                <StatusText $w={9} $center><Minus size={6} /></StatusText>
                <Zoomer><ZoomThumb /></Zoomer>
                <StatusText $w={8} $center><Plus size={6} /></StatusText>
                <StatusText $w={28} $center>100%</StatusText>
            </StatusBar>
            <Taskbar>
                <Start><WinIcon /></Start>
                <SearchBox><MirrorSearch size={12} />Type here to search</SearchBox>
                <TaskIcon $w={32}><Circle size={10} strokeWidth={2.4} color="#eee" /></TaskIcon>
                <TaskIcon $w={27}><svg width="11" height="10" viewBox="0 0 11 10"><path d="M.5 2.500h6v5h-6zM9 1v8M1 .5h5M1 9.500h5" fill="none" stroke="#ccc" /></svg></TaskIcon>
                <TaskIcon $w={27} $bar $ml={10}><Folder /></TaskIcon>
                <TaskIcon $w={27} $bar $ml={6}><Chrome /></TaskIcon>
                <TaskIcon $w={32} $on $bar $ml={4}><ExcelIcon /></TaskIcon>
                <Tray>
                    <ChevronUp size={11} />
                    <svg width="8" height="11" viewBox="0 0 8 11"><rect x="1" y="1" width="6" height="7" fill="none" stroke="#ccc" /><path d="M2 10h4" stroke="#ccc" /></svg>
                    <svg width="10" height="11" viewBox="0 0 10 11"><rect x="1" y="4" width="8" height="7" fill="#b8202c" /><circle cx="3" cy="2" r="1.5" fill="#e44" /><circle cx="7" cy="2" r="1.5" fill="#e44" /></svg>
                    <svg width="11" height="8" viewBox="0 0 11 8"><ellipse cx="5" cy="5" rx="5" ry="3" fill="#8fa6b8" /><circle cx="8" cy="6" r="2" fill="#4f8fe8" /></svg>
                    <svg width="10" height="8" viewBox="0 0 10 8"><path d="M0 1h4l1 1h5v6H0z" fill="#dcdcdc" /></svg>
                    <svg width="10" height="10" viewBox="0 0 10 10"><path d="M1 9a8 8 0 0 1 8-8M3 9a6 6 0 0 1 6-6M5 9a4 4 0 0 1 4-4" fill="none" stroke="#aaa" /></svg>
                    <svg width="11" height="9" viewBox="0 0 11 9"><path d="M0 3h2l3-3v9L2 6H0zM7 3l3 3M10 3L7 6" fill="none" stroke="#ccc" /></svg>
                    <span>ENG</span>
                    <Clock>11:45<br />22-06-2021</Clock>
                    <svg width="11" height="11" viewBox="0 0 11 11"><path d="M.5.5h10v8H7L5.500 10.500V8.500H.5z" fill="#e8e8e8" /><path d="M2 3h7M2 5h7" stroke="#666" strokeWidth=".7" /></svg>
                </Tray>
            </Taskbar>
        </Page>
    );
};

export default App;
